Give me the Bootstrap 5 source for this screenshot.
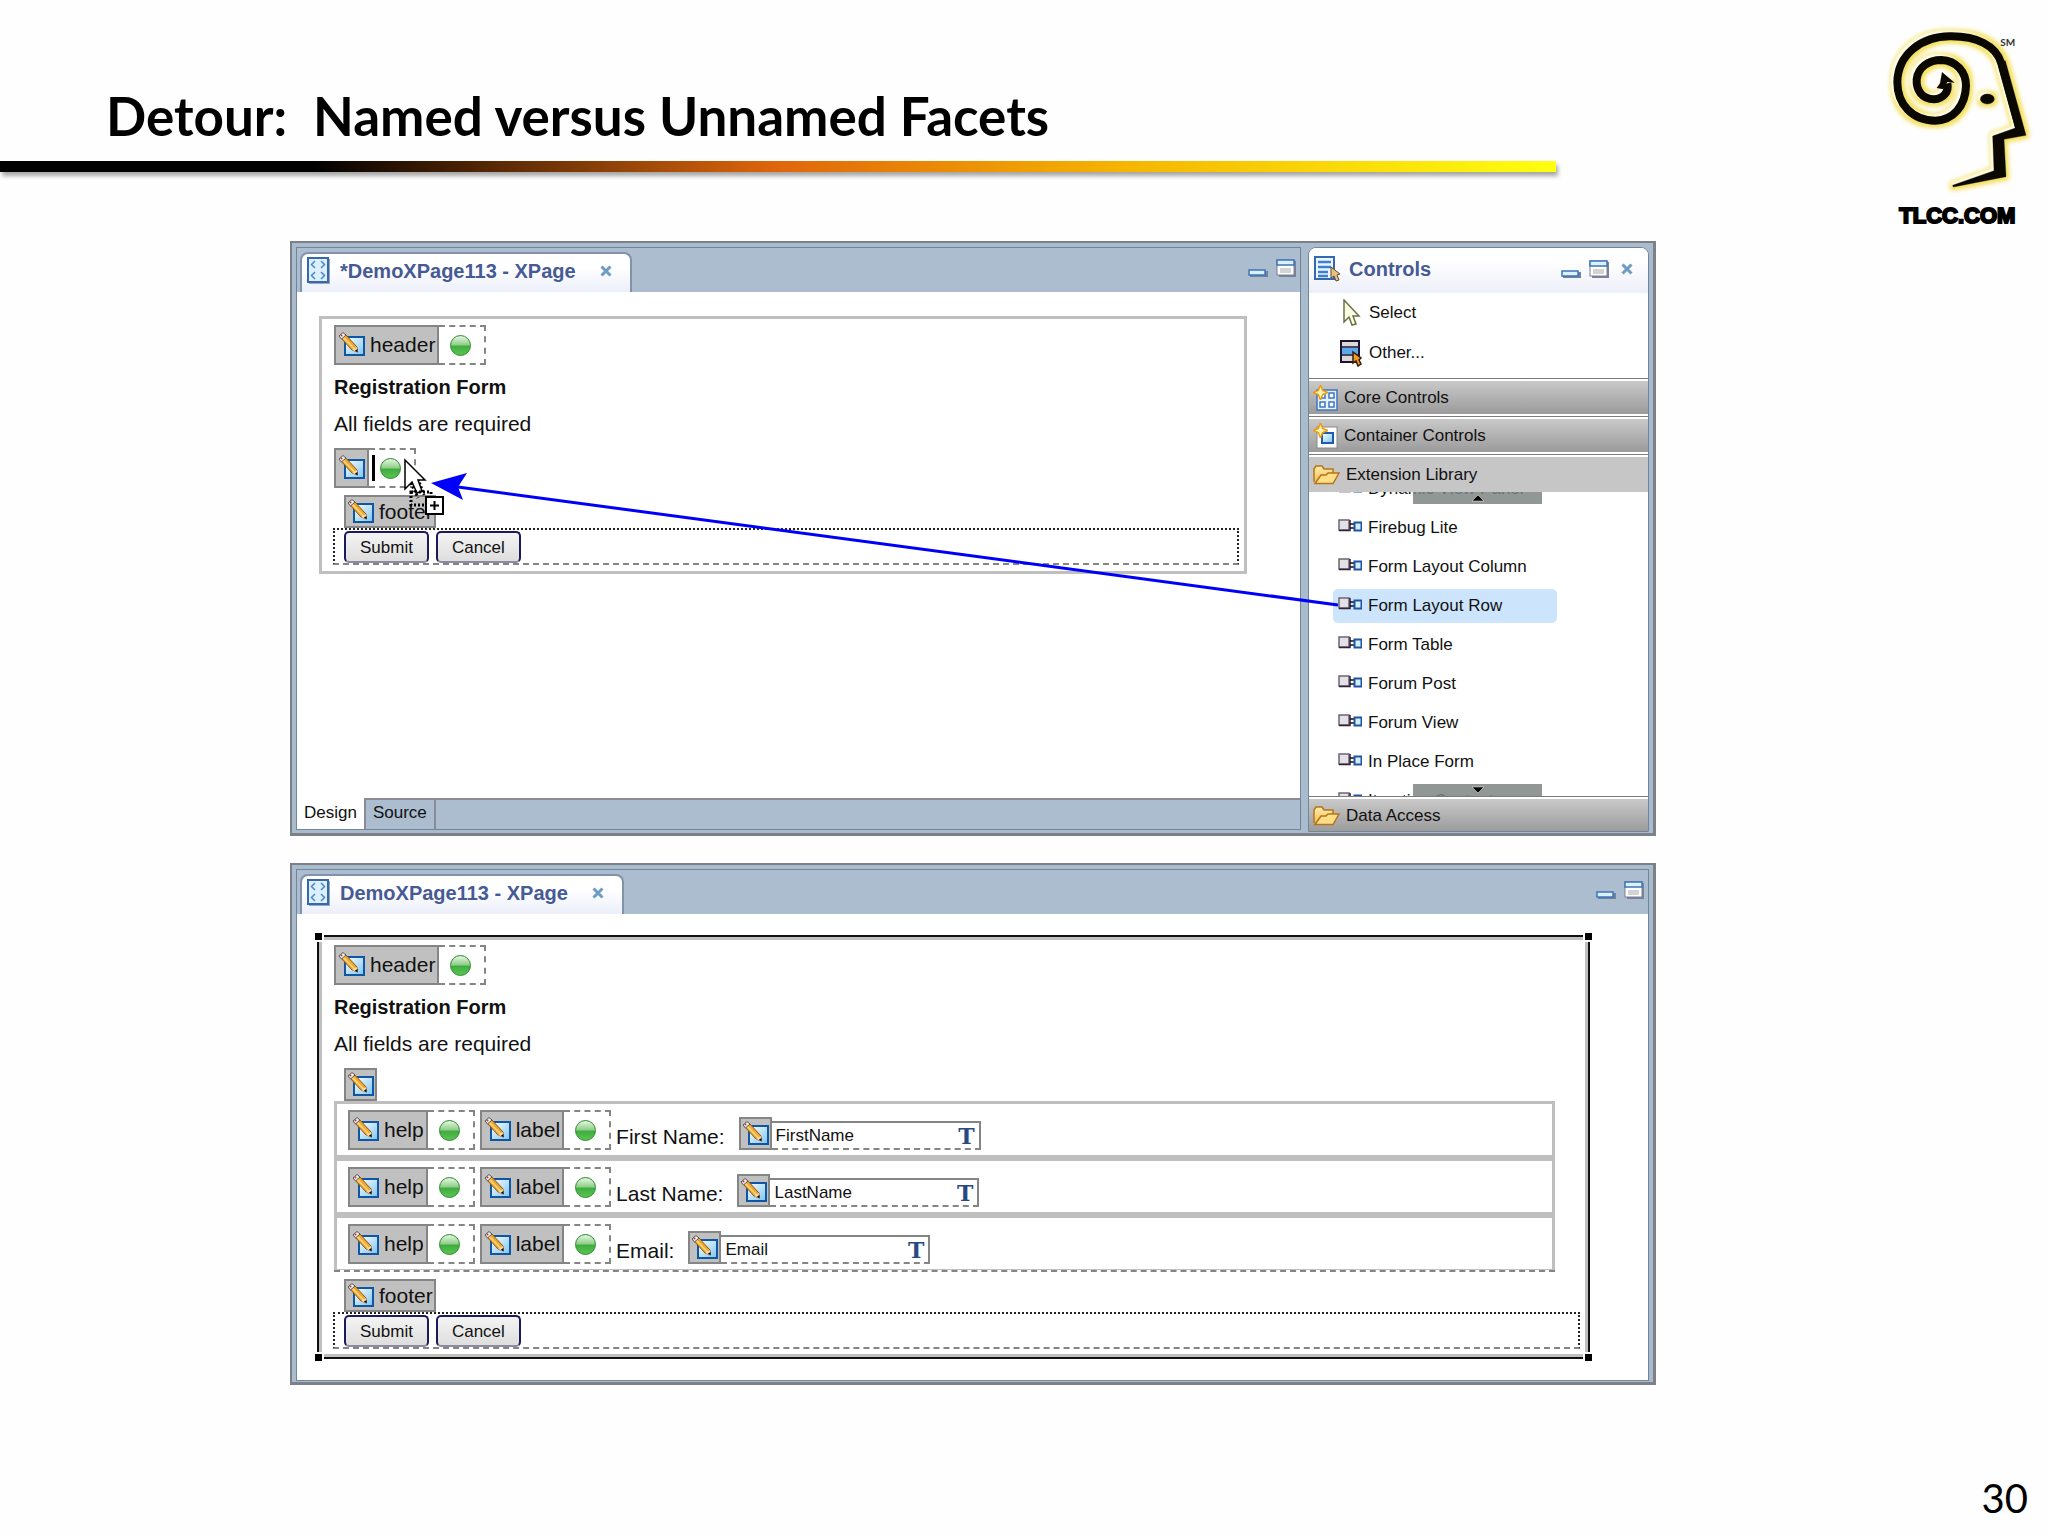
<!DOCTYPE html>
<html lang="en">
<head>
<meta charset="utf-8">
<meta name="viewport" content="width=device-width, initial-scale=1">
<title>Detour: Named versus Unnamed Facets</title>
<link href="https://cdn.jsdelivr.net/npm/bootstrap@5.3.0/dist/css/bootstrap.min.css" rel="stylesheet">
<style>
  body { font-family: "Liberation Sans", Arial, sans-serif; color: #111; background: #fefefe; }
  .slide-title { font: 700 53px/60px Lato, Calibri, sans-serif; color: #000; padding: 86px 0 0 106px; margin: 0 0 15px; white-space: pre-wrap; }
  .slide-head { height: 241px; }
  .title-col { width: 76%; }
  .rule-bar { height: 11px; background: linear-gradient(90deg, #000 0, #000 20%, #e0660c 50%, #f5b400 72%, #ffff10 100%); box-shadow: 2px 4px 4px rgba(0,0,0,.35); }
  .stage { padding: 0 392px 0 290px; }
  .page-no { font: 40px/56px Lato, Calibri, sans-serif; color: #000; padding: 0 20px 10px 0; }

  .ide { background: #a9bccd; border: 2px solid #7d8088; border-right-width: 3px; border-bottom-width: 3px; padding: 4px 4px 1px; }
  .ide + .ide { margin-top: 27px; }
  .pane { border: 1px solid #73859b; background: #fff; min-width: 0; }
  .editor { margin: 0 7px 2px 0; }
  .strip { height: 44px; background: #abbdce; }
  .strip-tools { padding: 0 4px 4px 0; }
  .file-tab { height: 40px; gap: 9px; padding: 0 18px 5px 5px; margin-left: 3px; border: 2px solid #8193aa; border-bottom: 0; border-radius: 8px 8px 0 0; background: linear-gradient(#fff 35%, #eceffa); }
  .tab-name { font: bold 20px/26px "Liberation Sans", Arial, sans-serif; color: #465a94; margin: 0; }
  .file-tab .tab-name { margin-right: 15px; }
  .bare { border: 0; background: none; padding: 0; line-height: 0; }
  .controls { width: 341px; border-radius: 8px 8px 0 0; overflow: hidden; }
  .controls-head { height: 45px; padding: 0 15px 4px 5px; background: linear-gradient(#fff 30%, #edeff9); }
  .ui { font-size: 17px; line-height: 26px; color: #111; }
  .tools { height: 85px; }
  .tools a, .lib a { text-decoration: none; }
  .tools a { height: 40px; gap: 7px; padding-left: 31px; }
  .drawer { height: 38px; border: 0; border-top: 1px solid #7c7c7c; padding: 2px 0; background: #fff; text-align: left; width: 100%; }
  .drawer > span { height: 33px; gap: 6px; padding-left: 4px; background: linear-gradient(#c9c9c9, #9b9b9b); }
  .drawer.open > span { background: #c6c6c6; height: 35px; }
  .drawer:last-child { height: 35px; padding-bottom: 0; }
  .lib { height: 304px; overflow: hidden; }
  .lib ul { margin: -23px 0 0 24px; }
  .lib li { height: 39px; padding: 3px 0 2px; }
  .lib a { height: 34px; width: 224px; gap: 6px; padding-left: 5px; border-radius: 5px; }
  .lib a.picked { background: #cde4fd; }
  .lib a svg { margin-top: -5px; }
  .scroller { width: 129px; height: 12px; left: 104px; background: rgba(125,133,131,.85); border: 0; padding: 0; line-height: 0; }
  .view-tabs { height: 31px; background: #abbdce; border-top: 2px solid #8b8b98; }
  .view-tabs button { border: 0; border-right: 2px solid #8b8b98; background: none; padding: 0 7px 3px; }
  .view-tabs button.on { background: #fff; margin-top: -2px; padding-bottom: 1px; }

  .form-box { border: 3px solid #bfbfbf; padding: 6px 5px 6px 12px; margin: 24px 53px 34px 22px; }
  .picked-box { outline: 2px solid #111; margin: 23px 60px 23px 22px; padding-top: 5px; padding-bottom: 5px; }
  .grip { width: 7px; height: 7px; background: #000; box-shadow: 0 0 0 2px #fff; }
  .g-l { left: -7px; } .g-r { right: -7px; } .g-t { top: -7px; } .g-b { bottom: -7px; }
  .doc { font-size: 21px; line-height: 26px; margin: 0; }
  .reg { font-size: 20px; margin-top: 9px; }
  .all-req { margin-top: 11px; }
  .drop-row { margin-top: 11px; }
  .foot-row, .low-row { margin-left: 10px; }
  .foot-row { margin-top: 7px; }
  .second { margin-left: 5px; }
  .cap { margin: 0 14px 0 5px; }
  .sheet { display: flow-root; }
  .facet-tab { background: #c0c0c0; border: 2px solid #858585; height: 40px; padding: 0 2px; gap: 5px; font-size: 21px; line-height: 26px; }
  .facet-tab svg, .strip svg, .tools svg { flex: none; }
  .low { height: 33px; padding: 0 1px; }
  .slot { width: 47px; height: 40px; border: 2px dashed #858585; border-left: 0; padding-left: 11px; gap: 5px; }
  .slot.dropping { padding-left: 3px; }
  .caret { width: 3px; height: 26px; background: #000; }
  .ball { width: 21px; height: 21px; border-radius: 50%; border: 1px solid #2a8a2a; background: linear-gradient(#d8f0d4 8%, #93cf8c 45%, #3fae3f 55%, #5cc455); }
  .btn-box { height: 37px; border: 2px dotted #222; border-bottom: 2px dashed #858585; margin-left: -1px; padding: 1px 0 0 9px; gap: 7px; }
  .form-btn { height: 32px; padding: 1px 14px 0; border: 2px solid #1b1b5c; border-bottom-color: #8a8aa0; border-radius: 5px; background: linear-gradient(#f4f4f4, #dedede); }
  .rows { margin-right: 25px; border-bottom: 2px dashed #858585; }
  .form-line { height: 57px; border: 3px solid #bfbfbf; padding: 6px 11px 5px; }
  .form-line:last-child { border-bottom-width: 1px; height: 55px; }
  .field { width: 209px; height: 29px; border: 2px solid #858585; border-bottom-style: dashed; border-left: 0; padding-right: 4px; background: #fff; }
  .field input { border: 0; padding: 0 0 0 4px; outline: 0; background: none; min-width: 0; }
  .tee { font: bold 22px/24px "DejaVu Serif", "Liberation Serif", serif; color: #294a80; }
  .over { pointer-events: none; z-index: 3; }
</style>
<script src="https://cdn.jsdelivr.net/npm/bootstrap@5.3.0/dist/js/bootstrap.bundle.min.js"></script>
</head>
<body class="d-flex flex-column min-vh-100">

<svg width="0" height="0" class="position-absolute" aria-hidden="true">
  <defs>
    <linearGradient id="sky" x1="0" y1="0" x2="1" y2="1"><stop offset="0" stop-color="#fff"/><stop offset="1" stop-color="#7cc4f4"/></linearGradient>
    <linearGradient id="gold" x1="0" y1="0" x2="0" y2="1"><stop offset="0" stop-color="#fff0b0"/><stop offset="1" stop-color="#f5bb50"/></linearGradient>
    <symbol id="pencil" viewBox="0 0 27 26">
      <rect x="7" y="5" width="19" height="18" fill="url(#sky)" stroke="#0f56a5" stroke-width="2"/>
      <path d="M3 6 7 2 19 15 19.500 20 14 18Z" fill="#f3a62c" stroke="#8a5a14" stroke-width="1"/>
      <path d="M4.500 4.500 16.500 17" stroke="#ffd98a" stroke-width="1.500"/>
      <path d="M14 18 19 15 19.500 20Z" fill="#f7d6b0"/><path d="M17 18.500 19.500 20.500 19.500 17Z" fill="#000"/>
      <path d="M1 4 5 .500 8 3 3.500 7Z" fill="#eee" stroke="#555" stroke-width="1"/><circle cx="3.500" cy="3.500" r="1" fill="#c33"/>
    </symbol>
    <symbol id="xpage" viewBox="0 0 24 28">
      <rect x="2" y="2" width="21" height="25" fill="#9aa6bb"/>
      <rect x="1" y="1" width="20" height="24" fill="#dcefff" stroke="#3568ae" stroke-width="2"/>
      <path d="M8 4 4.500 7.500 8 11M14 4 17.500 7.500 14 11M8 15 4.500 18.500 8 22M14 15 17.500 18.500 14 22" fill="none" stroke="#4e86cc" stroke-width="1.500"/>
    </symbol>
    <symbol id="cross" viewBox="0 0 12 12"><path d="M1.500 1.500 10.500 10.500M10.500 1.500 1.500 10.500" stroke="#6f9cc2" stroke-width="3"/></symbol>
    <symbol id="minim" viewBox="0 0 20 18"><rect x="2" y="12" width="18" height="6" fill="#73819a"/><rect x="1" y="11" width="16" height="5" fill="#d8f2ff" stroke="#3f74b8" stroke-width="1.500"/></symbol>
    <symbol id="maxim" viewBox="0 0 20 18"><rect x="3" y="2" width="17" height="16" fill="#77839a"/><rect x="1" y="1" width="17" height="15" fill="#fff" stroke="#7d7f95" stroke-width="1"/><rect x="1" y="1" width="17" height="5" fill="#d8f2ff" stroke="#3f74b8" stroke-width="1.500"/><rect x="4" y="9" width="11" height="5" fill="#d3d3d3"/></symbol>
    <symbol id="folder" viewBox="0 0 27 20">
      <path d="M1 17V4L3 1H9L11 4H20V8" fill="url(#gold)" stroke="#b5741c" stroke-width="1.500"/>
      <path d="M2 18.500 8 10 13 10 15 8H26L20 18.500Z" fill="#ffdf86" stroke="#b5741c" stroke-width="1.500"/>
    </symbol>
    <symbol id="star" viewBox="0 0 14 14"><path d="M7 0 9 5 14 7 9 9 7 14 5 9 0 7 5 5Z" fill="#fff3b0" stroke="#ee9a10" stroke-width="1.300"/></symbol>
    <symbol id="node" viewBox="0 0 24 14">
      <rect x="1" y="1" width="10" height="10" fill="#e3e1e6" stroke="#6e6576" stroke-width="1.500"/><path d="M1 11.500H12V1" fill="none" stroke="#33203c" stroke-width="1.500"/>
      <path d="M12 5H17M12 9H17" stroke="#111" stroke-width="1.500"/><rect x="16.500" y="3.500" width="7" height="8" fill="#d2efff" stroke="#2353a4" stroke-width="2"/>
    </symbol>
  </defs>
</svg>

<header class="slide-head d-flex justify-content-between">
  <div class="title-col">
    <h1 class="slide-title">Detour:  Named versus Unnamed Facets</h1>
    <div class="rule-bar"></div>
  </div>
  <svg width="188" height="240" viewBox="0 0 564 720" role="img" aria-label="TLCC.COM">
    <defs><filter id="glow" x="-20%" y="-20%" width="140%" height="140%"><feMorphology operator="dilate" radius="10"/><feGaussianBlur stdDeviation="7"/></filter>
    <filter id="soft" x="-20%" y="-20%" width="140%" height="140%"><feGaussianBlur stdDeviation="3"/></filter>
    <g id="face">
      <path d="M262 250C268 275 250 296 222 298C186 298 168 270 170 238C174 202 206 180 244 180C290 182 318 216 318 258C316 318 280 360 226 362C156 362 112 312 112 246C114 164 182 110 270 109C350 108 408 136 424 190L480 392" fill="none" stroke-width="24"/>
      <path d="M413 190 436 182 498 406 432 418 438 530 280 561 278 556 402 512 398 408 466 384Z"/>
      <ellipse cx="382" cy="297" rx="21" ry="15"/>
    </g></defs>
    <use href="#face" fill="#f3df58" stroke="#f3df58" filter="url(#glow)"/>
    <use href="#face" fill="#fffef0" stroke="#fffef0" transform="translate(-8 -6)" filter="url(#soft)"/>
    <use href="#face" fill="#0a0800" stroke="#0a0800"/>
    <path d="M246 216 284 248 262 246 250 268 230 264 240 250Z" fill="#0a0800"/>
    <text x="421" y="137" font-family="Lato" font-size="30" font-weight="700" fill="#333">SM</text>
    <text x="118" y="668" font-family="Liberation Sans" font-size="66" font-weight="700" fill="#000" stroke="#000" stroke-width="6">TLCC.COM</text>
  </svg>
</header>

<main class="stage">
  <section class="ide position-relative d-flex" aria-label="Designer window with palette">
    <div class="pane editor flex-grow-1 d-flex flex-column">
      <div class="strip d-flex justify-content-between align-items-end">
        <div class="file-tab d-flex align-items-center">
          <svg width="24" height="28"><use href="#xpage"/></svg>
          <h2 class="tab-name">*DemoXPage113 - XPage</h2>
          <button class="bare" aria-label="Close tab"><svg width="12" height="12"><use href="#cross"/></svg></button>
        </div>
        <div class="strip-tools d-flex gap-2 align-self-center">
          <button class="bare" aria-label="Minimize"><svg width="20" height="18"><use href="#minim"/></svg></button>
          <button class="bare" aria-label="Maximize"><svg width="20" height="18"><use href="#maxim"/></svg></button>
        </div>
      </div>
      <div class="sheet flex-grow-1">
        <div class="form-box">
          <div class="d-flex"><div class="facet-tab d-flex align-items-center"><svg width="27" height="26"><use href="#pencil"/></svg>header</div><div class="slot d-flex align-items-center"><span class="ball"></span></div></div>
          <p class="doc reg fw-bold">Registration Form</p>
          <p class="doc all-req">All fields are required</p>
          <div class="d-flex drop-row"><div class="facet-tab d-flex align-items-center"><svg width="27" height="26"><use href="#pencil"/></svg></div><div class="slot dropping d-flex align-items-center"><span class="caret"></span><span class="ball"></span></div></div>
          <div class="d-flex foot-row"><div class="facet-tab low d-flex align-items-center"><svg width="27" height="26"><use href="#pencil"/></svg>footer</div></div>
          <div class="btn-box d-flex"><button class="form-btn ui">Submit</button><button class="form-btn ui">Cancel</button></div>
        </div>
      </div>
      <div class="view-tabs d-flex">
        <button class="ui on">Design</button><button class="ui">Source</button>
      </div>
    </div>

    <aside class="pane controls flex-shrink-0">
      <div class="controls-head d-flex align-items-center">
        <svg width="27" height="26" viewBox="0 0 27 26"><rect x="1" y="1" width="19" height="22" fill="#eaf6ff" stroke="#3568ae" stroke-width="2"/><path d="M4 6H17M4 11H17M4 16H14M4 20H14" stroke="#3f7fd0" stroke-width="2.500"/><path d="M17 11V22L20 20 22 25 25 24 23 19 26 18Z" fill="#e8c27a" stroke="#5a4a3a"/></svg>
        <h2 class="tab-name ms-2 me-auto">Controls</h2>
        <div class="d-flex gap-2 align-items-center">
          <button class="bare" aria-label="Minimize palette"><svg width="20" height="18"><use href="#minim"/></svg></button>
          <button class="bare" aria-label="Maximize palette"><svg width="20" height="18"><use href="#maxim"/></svg></button>
          <button class="bare ms-1" aria-label="Close palette"><svg width="12" height="12"><use href="#cross"/></svg></button>
        </div>
      </div>
      <div class="tools">
        <a href="#" class="ui d-flex align-items-center"><svg width="22" height="28" viewBox="0 0 22 28"><path d="M4 1V23L9 18 12 26 16 25 13 17H19Z" fill="#fbfde2" stroke="#6c7048" stroke-width="1.500"/></svg>Select</a>
        <a href="#" class="ui d-flex align-items-center"><svg width="22" height="28" viewBox="1 0 22 28"><rect x="2" y="2" width="18" height="21" fill="#d9d9d9" stroke="#1a1430" stroke-width="2"/><rect x="3" y="9" width="16" height="6" fill="#5aa9ee"/><path d="M3 8H19M3 16H19" stroke="#1a1430" stroke-width="1.500"/><path d="M14 13V24L17 22 19 27 22 25 20 21 22 19Z" fill="#f09a2c" stroke="#3a1e08" stroke-width="1.500"/></svg>Other...</a>
      </div>
      <button class="drawer d-block"><span class="ui d-flex align-items-center"><svg width="25" height="26" viewBox="0 0 25 26"><rect x="4" y="5" width="20" height="20" fill="#e4f1ff" stroke="#3f74c0" stroke-width="1.500"/><g fill="#fff" stroke="#3f74c0" stroke-width="1.500"><rect x="7" y="8" width="5" height="5"/><rect x="16" y="8" width="5" height="5"/><rect x="7" y="17" width="5" height="5"/><rect x="16" y="17" width="5" height="5"/></g><use href="#star" width="15" height="15"/></svg>Core Controls</span></button>
      <button class="drawer d-block"><span class="ui d-flex align-items-center"><svg width="25" height="26" viewBox="0 0 25 26"><rect x="4" y="4" width="20" height="21" fill="#fff" stroke="#8a8a8a"/><rect x="9" y="10" width="11" height="10" fill="url(#sky)" stroke="#1b5fae" stroke-width="2"/><use href="#star" width="15" height="15"/></svg>Container Controls</span></button>
      <button class="drawer open d-block"><span class="ui d-flex align-items-center"><svg width="27" height="20"><use href="#folder"/></svg>Extension Library</span></button>
      <div class="lib position-relative">
        <ul class="list-unstyled">
          <li><a href="#" class="ui d-flex align-items-center"><svg width="24" height="14"><use href="#node"/></svg>Dynamic View Panel</a></li>
          <li><a href="#" class="ui d-flex align-items-center"><svg width="24" height="14"><use href="#node"/></svg>Firebug Lite</a></li>
          <li><a href="#" class="ui d-flex align-items-center"><svg width="24" height="14"><use href="#node"/></svg>Form Layout Column</a></li>
          <li><a href="#" class="ui picked d-flex align-items-center"><svg width="24" height="14"><use href="#node"/></svg>Form Layout Row</a></li>
          <li><a href="#" class="ui d-flex align-items-center"><svg width="24" height="14"><use href="#node"/></svg>Form Table</a></li>
          <li><a href="#" class="ui d-flex align-items-center"><svg width="24" height="14"><use href="#node"/></svg>Forum Post</a></li>
          <li><a href="#" class="ui d-flex align-items-center"><svg width="24" height="14"><use href="#node"/></svg>Forum View</a></li>
          <li><a href="#" class="ui d-flex align-items-center"><svg width="24" height="14"><use href="#node"/></svg>In Place Form</a></li>
          <li><a href="#" class="ui d-flex align-items-center"><svg width="24" height="14"><use href="#node"/></svg>Iterating Content</a></li>
        </ul>
        <button class="scroller position-absolute top-0" aria-label="Scroll up"><svg width="12" height="10" viewBox="0 0 12 10"><path d="M0 8 6 2 12 8Z" fill="#000" stroke="#fff" stroke-width=".500"/></svg></button>
        <button class="scroller position-absolute bottom-0" aria-label="Scroll down"><svg width="12" height="10" viewBox="0 0 12 10"><path d="M0 2 6 8 12 2Z" fill="#000" stroke="#fff" stroke-width=".500"/></svg></button>
      </div>
      <button class="drawer d-block"><span class="ui d-flex align-items-center"><svg width="27" height="20"><use href="#folder"/></svg>Data Access</span></button>
    </aside>

    <svg class="over position-absolute top-0 start-0" width="1060" height="380" viewBox="2 2 1060 380" aria-hidden="true">
      <path d="M168 246 1048 364" stroke="#0000fa" stroke-width="3"/>
      <path d="M141 242 177 232 168 246 173 259Z" fill="#0000fa"/>
      <path d="M128 238 134 254M121 242 128 257" stroke="#000" stroke-width="3" stroke-dasharray="2 2"/>
      <path d="M115 219V248L122 241 127 252 132 250 128 239H135Z" fill="#fff" stroke="#000" stroke-width="1.500"/>
      <rect x="121" y="251" width="20" height="13" fill="none" stroke="#000" stroke-width="3" stroke-dasharray="2 2"/>
      <rect x="136" y="256" width="17" height="17" fill="#fff" stroke="#000" stroke-width="2"/>
      <path d="M140 264.500H149M144.500 260V269" stroke="#000" stroke-width="2"/>
    </svg>
  </section>

  <section class="ide" aria-label="Designer window with form rows">
    <div class="pane">
      <div class="strip d-flex justify-content-between align-items-end">
        <div class="file-tab d-flex align-items-center">
          <svg width="24" height="28"><use href="#xpage"/></svg>
          <h2 class="tab-name">DemoXPage113 - XPage</h2>
          <button class="bare" aria-label="Close tab"><svg width="12" height="12"><use href="#cross"/></svg></button>
        </div>
        <div class="strip-tools d-flex gap-2 align-self-center">
          <button class="bare" aria-label="Minimize"><svg width="20" height="18"><use href="#minim"/></svg></button>
          <button class="bare" aria-label="Maximize"><svg width="20" height="18"><use href="#maxim"/></svg></button>
        </div>
      </div>
      <div class="sheet">
        <div class="form-box picked-box position-relative">
          <span class="grip g-l g-t position-absolute"></span><span class="grip g-r g-t position-absolute"></span><span class="grip g-l g-b position-absolute"></span><span class="grip g-r g-b position-absolute"></span>
          <div class="d-flex"><div class="facet-tab d-flex align-items-center"><svg width="27" height="26"><use href="#pencil"/></svg>header</div><div class="slot d-flex align-items-center"><span class="ball"></span></div></div>
          <p class="doc reg fw-bold">Registration Form</p>
          <p class="doc all-req">All fields are required</p>
          <div class="d-flex drop-row low-row"><div class="facet-tab low d-flex align-items-center"><svg width="27" height="26"><use href="#pencil"/></svg></div></div>
          <div class="rows">
            <div class="form-line d-flex align-items-end">
              <div class="facet-tab d-flex align-items-center"><svg width="27" height="26"><use href="#pencil"/></svg>help</div><div class="slot d-flex align-items-center"><span class="ball"></span></div>
              <div class="facet-tab second d-flex align-items-center"><svg width="27" height="26"><use href="#pencil"/></svg>label</div><div class="slot d-flex align-items-center"><span class="ball"></span></div>
              <label class="doc cap" for="f1">First Name:</label>
              <div class="facet-tab low d-flex align-items-center"><svg width="27" height="26"><use href="#pencil"/></svg></div>
              <div class="field d-flex align-items-center"><input class="ui flex-grow-1" id="f1" value="FirstName"><span class="tee">T</span></div>
            </div>
            <div class="form-line d-flex align-items-end">
              <div class="facet-tab d-flex align-items-center"><svg width="27" height="26"><use href="#pencil"/></svg>help</div><div class="slot d-flex align-items-center"><span class="ball"></span></div>
              <div class="facet-tab second d-flex align-items-center"><svg width="27" height="26"><use href="#pencil"/></svg>label</div><div class="slot d-flex align-items-center"><span class="ball"></span></div>
              <label class="doc cap" for="f2">Last Name:</label>
              <div class="facet-tab low d-flex align-items-center"><svg width="27" height="26"><use href="#pencil"/></svg></div>
              <div class="field d-flex align-items-center"><input class="ui flex-grow-1" id="f2" value="LastName"><span class="tee">T</span></div>
            </div>
            <div class="form-line d-flex align-items-end">
              <div class="facet-tab d-flex align-items-center"><svg width="27" height="26"><use href="#pencil"/></svg>help</div><div class="slot d-flex align-items-center"><span class="ball"></span></div>
              <div class="facet-tab second d-flex align-items-center"><svg width="27" height="26"><use href="#pencil"/></svg>label</div><div class="slot d-flex align-items-center"><span class="ball"></span></div>
              <label class="doc cap" for="f3">Email:</label>
              <div class="facet-tab low d-flex align-items-center"><svg width="27" height="26"><use href="#pencil"/></svg></div>
              <div class="field d-flex align-items-center"><input class="ui flex-grow-1" id="f3" value="Email"><span class="tee">T</span></div>
            </div>
          </div>
          <div class="d-flex foot-row"><div class="facet-tab low d-flex align-items-center"><svg width="27" height="26"><use href="#pencil"/></svg>footer</div></div>
          <div class="btn-box d-flex"><button class="form-btn ui">Submit</button><button class="form-btn ui">Cancel</button></div>
        </div>
      </div>
    </div>
  </section>
</main>

<footer class="page-no mt-auto text-end">30</footer>
</body>
</html>
